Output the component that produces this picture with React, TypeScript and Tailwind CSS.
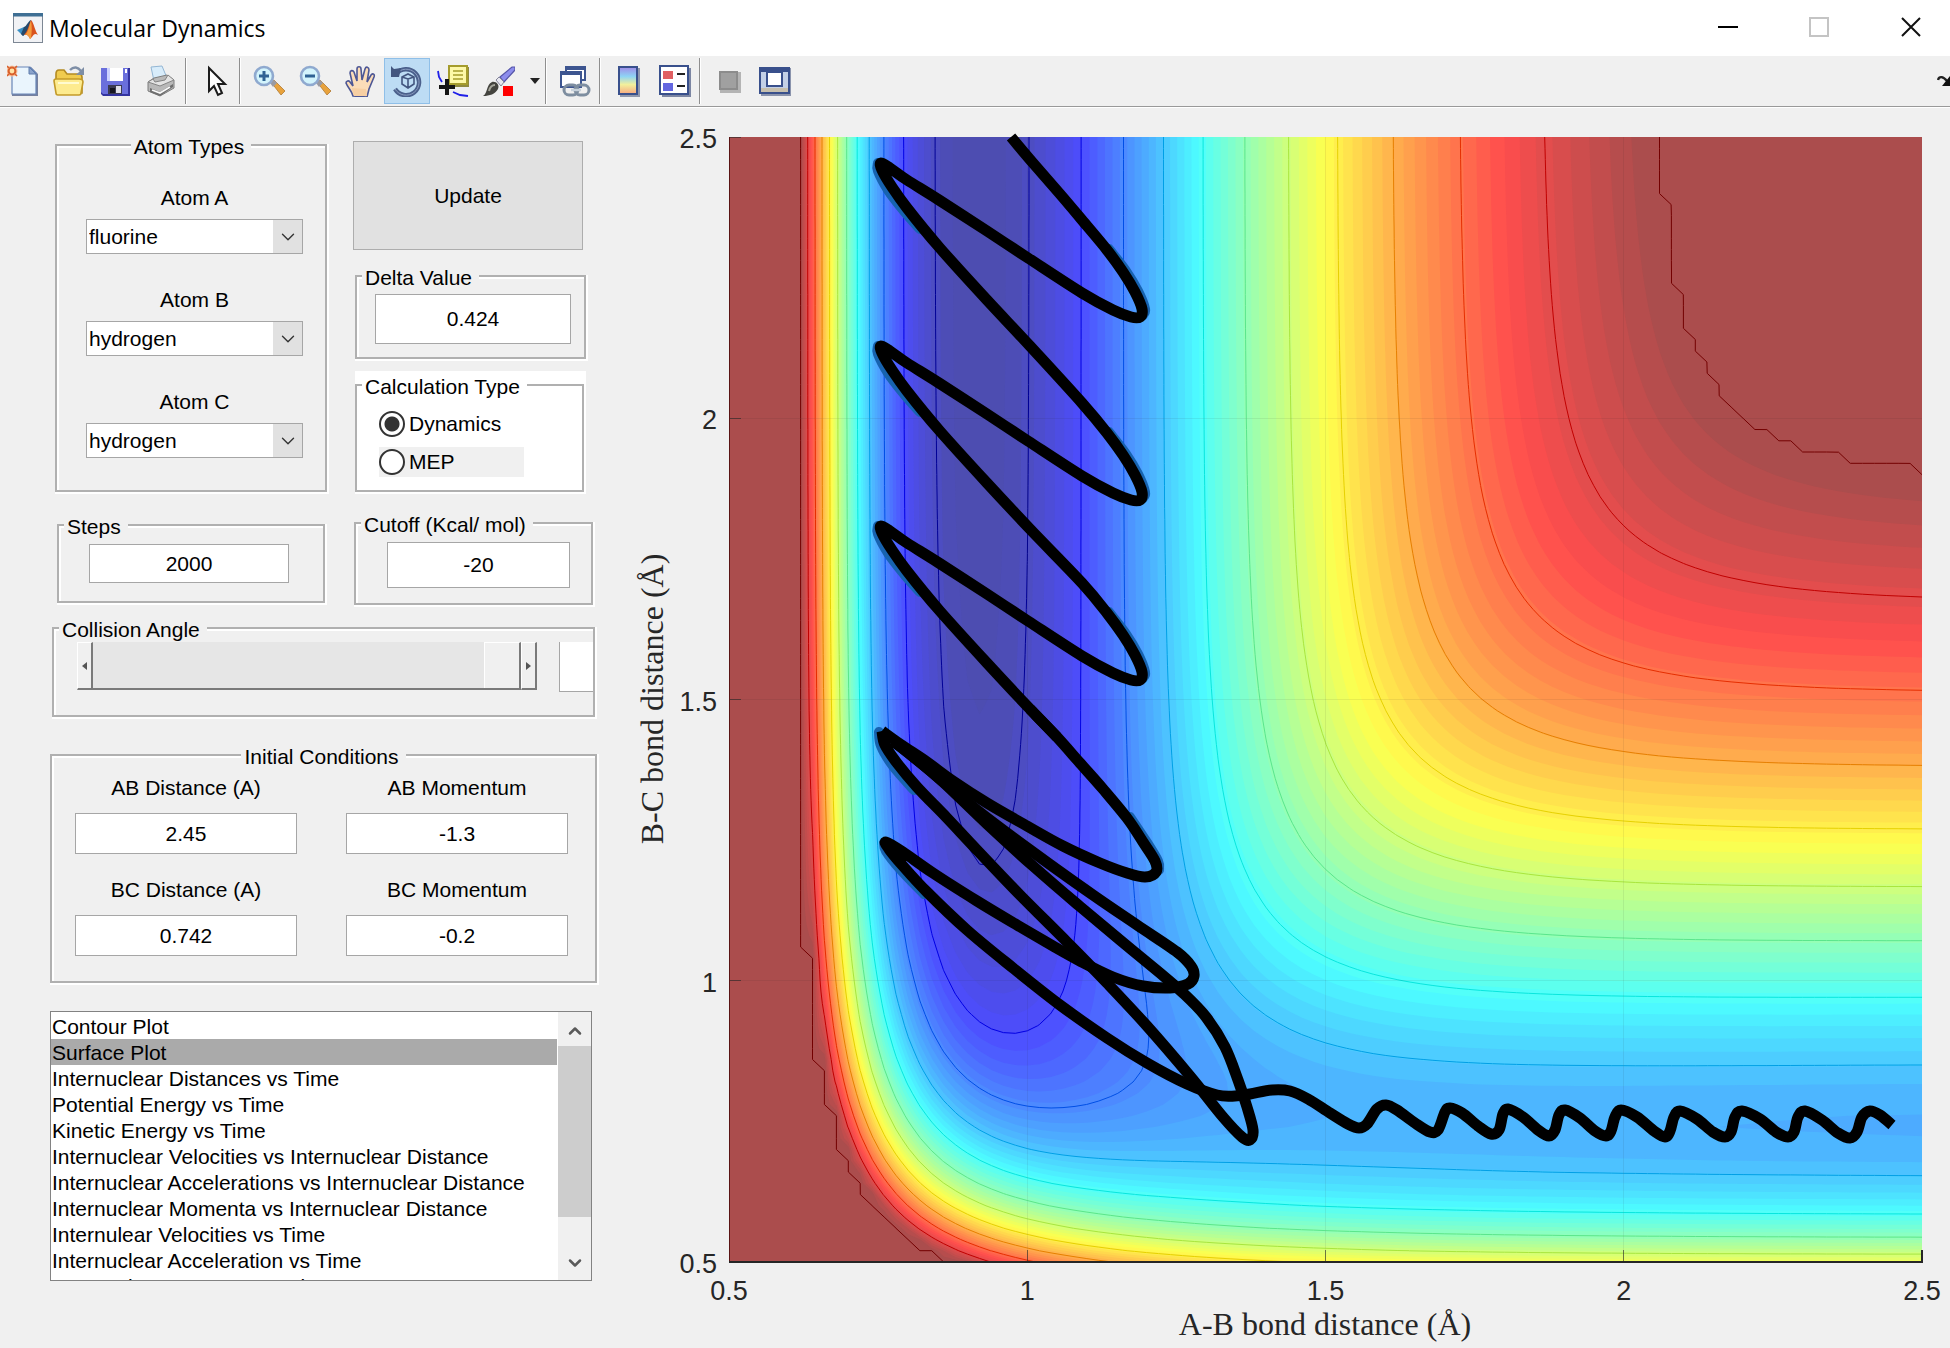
import { useId, useMemo, useState, type ReactNode } from "react";
import { ChevronDown, ChevronUp } from "lucide-react";

type Point = [number, number];

// ---------------------------------------------------------------------------
// Potential energy surface (LEPS, collinear F-H-H, kcal/mol)
// ---------------------------------------------------------------------------

const HF = { d: 141.1, b: 2.2187, re: 0.917, k: 0.167 };
const HH = { d: 110.2, b: 1.96, re: 0.7419, k: 0.2 };

const CUTOFF = -22.35;
const FLOOR = -141.5;
const BANDS = 64;
const LEVELS = [-136.8, -126.7, -116.4, -106, -95.7, -85.2, -74.9, -64.4, -53.9, -43.2, -32.5, CUTOFF - 0.001];

function integrals(bond: typeof HF, r: number): Point {
  const e = Math.exp(-bond.b * (r - bond.re));
  const { d, k } = bond;
  const q = (d / 4) * ((3 + k) * e * e - (2 + 6 * k) * e);
  const j = (d / 4) * ((1 + 3 * k) * e * e - (6 + 2 * k) * e);
  return [q / (1 + k), j / (1 + k)];
}

function potential(ab: number, bc: number) {
  const [q1, j1] = integrals(HF, ab);
  const [q2, j2] = integrals(HH, bc);
  const [q3, j3] = integrals(HF, ab + bc);
  const v = q1 + q2 + q3 - Math.sqrt(0.5 * ((j1 - j2) ** 2 + (j2 - j3) ** 2 + (j3 - j1) ** 2));
  return Math.min(v, CUTOFF);
}

// Plot area inside the svg
const LEFT = 729;
const RIGHT = 1922;
const TOP = 137;
const BOTTOM = 1262;
const sx = (r: number) => LEFT + ((r - 0.5) / 2) * (RIGHT - LEFT);
const sy = (r: number) => BOTTOM - ((r - 0.5) / 2) * (BOTTOM - TOP);

// Grid of 101 nodes per axis plus one outer ring that closes every contour
const NODES = 101;
const SIZE = NODES + 2;
const nodeAt = (i: number) => 0.5 + Math.min(Math.max(i - 1, 0), NODES - 1) * 0.02;

function buildGrid() {
  const grid = new Float64Array(SIZE * SIZE).fill(-1e9);
  for (let j = 1; j <= NODES; j++) {
    for (let i = 1; i <= NODES; i++) grid[j * SIZE + i] = potential(nodeAt(i), nodeAt(j));
  }
  return grid;
}

function traceRings(grid: Float64Array, level: number): Point[][] {
  const next = new Map<number, number>();
  for (let j = 0; j < SIZE - 1; j++) {
    for (let i = 0; i < SIZE - 1; i++) {
      const a = j * SIZE + i;
      const inside = [a, a + 1, a + SIZE + 1, a + SIZE].map((n) => grid[n] > level);
      const edges = [a * 2, (a + 1) * 2 + 1, (a + SIZE) * 2, a * 2 + 1];
      for (let k = 0; k < 4; k++) {
        if (!inside[k] || inside[(k + 1) % 4]) continue;
        for (let m = 1; m < 4; m++) {
          const n = (k + m) % 4;
          if (!inside[n] && inside[(n + 1) % 4]) {
            next.set(edges[k], edges[n]);
            break;
          }
        }
      }
    }
  }

  const locate = (edge: number): Point => {
    const a = edge >> 1;
    const b = edge & 1 ? a + SIZE : a + 1;
    const t = (level - grid[a]) / (grid[b] - grid[a]);
    const x1 = sx(nodeAt(a % SIZE));
    const x2 = sx(nodeAt(b % SIZE));
    const y1 = sy(nodeAt(Math.floor(a / SIZE)));
    const y2 = sy(nodeAt(Math.floor(b / SIZE)));
    return [x1 + (x2 - x1) * t, y1 + (y2 - y1) * t];
  };

  const rings: Point[][] = [];
  while (next.size > 0) {
    const ring: Point[] = [];
    let edge = next.keys().next().value as number;
    while (next.has(edge)) {
      ring.push(locate(edge));
      const following = next.get(edge) as number;
      next.delete(edge);
      edge = following;
    }
    rings.push(ring);
  }
  return rings;
}

const fmt = ([x, y]: Point) => `${x.toFixed(1)} ${y.toFixed(1)}`;

const fillPath = (rings: Point[][]) => rings.map((r) => `M${r.map(fmt).join("L")}Z`).join("");

// Same rings as strokes, without the parts that run along the frame
function linePath(rings: Point[][]) {
  const near = (a: number, b: number) => Math.abs(a - b) < 0.2;
  const onFrame = (p: Point, q: Point) =>
    [LEFT, RIGHT].some((x) => near(p[0], x) && near(q[0], x)) ||
    [TOP, BOTTOM].some((y) => near(p[1], y) && near(q[1], y));
  return rings
    .map((r) =>
      [...r, r[0]].map((p, i, all) => (i === 0 || onFrame(all[i - 1], p) ? "M" : "L") + fmt(p)).join(""),
    )
    .join("");
}

function jet(t: number, mix: number, scale = 1) {
  const channel = (c: number) => {
    const v = Math.min(Math.max(1.5 - Math.abs(4 * t - c), 0), 1);
    return Math.round(255 * (v * mix * scale + (1 - mix)));
  };
  return `rgb(${channel(3)},${channel(2)},${channel(1)})`;
}

// ---------------------------------------------------------------------------
// Trajectory
// ---------------------------------------------------------------------------

const REACTANTS: Point[] = [
  [1892, 1125], [1880, 1115], [1870, 1111], [1862, 1117], [1857, 1132], [1850, 1138],
  [1838, 1133], [1822, 1120], [1805, 1111], [1798, 1117], [1794, 1132], [1788, 1137],
  [1776, 1132], [1760, 1119], [1742, 1111], [1735, 1117], [1731, 1132], [1725, 1137],
  [1713, 1132], [1697, 1119], [1680, 1111], [1674, 1117], [1670, 1131], [1665, 1137],
  [1654, 1131], [1637, 1117], [1621, 1110], [1615, 1117], [1611, 1131], [1606, 1136],
  [1595, 1131], [1580, 1118], [1565, 1110], [1559, 1115], [1555, 1130], [1549, 1136],
  [1538, 1130], [1523, 1117], [1508, 1109], [1503, 1114], [1499, 1130], [1491, 1134],
  [1478, 1126], [1462, 1113], [1450, 1108], [1445, 1112], [1438, 1130], [1430, 1132],
  [1415, 1123], [1397, 1110], [1386, 1105], [1377, 1109], [1367, 1124], [1359, 1128],
  [1348, 1124], [1330, 1113], [1308, 1099], [1290, 1091], [1272, 1090], [1250, 1094],
  [1235, 1096], [1217, 1095], [1187, 1084], [1147, 1063], [1107, 1038], [1060, 1005],
  [1013, 968], [967, 930], [927, 892], [903, 866], [889, 849], [886, 842], [903, 852],
  [933, 873], [977, 901], [1017, 925], [1053, 946], [1080, 961], [1113, 977], [1143, 986],
  [1170, 988], [1188, 984], [1194, 976], [1191, 966], [1177, 952], [1137, 925], [1093, 895],
  [1037, 855], [977, 810], [927, 768], [893, 741],
];

const TRANSITION: Point[] = [
  [893, 741], [910, 754], [943, 782], [987, 824], [1033, 866], [1077, 904], [1120, 940],
  [1160, 973], [1183, 993], [1206, 1017], [1225, 1047], [1238, 1080], [1247, 1107],
  [1253, 1130], [1250, 1140], [1242, 1137], [1223, 1117], [1190, 1076], [1147, 1026],
  [1107, 983], [1067, 942], [1020, 895], [977, 850], [947, 818], [917, 787], [897, 763],
  [885, 745], [882, 731],
];

const COLLISION: Point[] = [
  [882, 731], [900, 744], [927, 762], [953, 781], [987, 803], [1027, 826], [1063, 846],
  [1100, 863], [1127, 873], [1145, 877], [1156, 872], [1155, 861], [1143, 842], [1127, 818],
  [1103, 789], [1080, 763], [1057, 737], [1030, 709],
];

// One vibration of the product molecule, repeated further down the channel
const VIBRATION: Point[] = [
  [1082, 220], [1107, 250], [1123, 272], [1135, 292], [1142, 309], [1140, 317], [1131, 317],
  [1113, 310], [1082, 293], [1028, 258], [987, 231], [939, 200], [907, 180], [890, 168],
  [881, 163], [882, 170], [892, 187], [907, 208], [939, 247], [987, 300], [1030, 346],
];

const shift = (points: Point[], dy: number) => points.map(([x, y]): Point => [x, y + dy]);

const PRODUCTS: Point[] = [
  [1011, 137],
  [1033, 163],
  [1060, 194],
  ...VIBRATION,
  ...shift(VIBRATION, 183),
  ...shift(VIBRATION, 363),
  [1057, 737],
];

// Turning points, where the line dips below the surface
const SUNKEN: Point[][] = [
  ...[0, 183, 363].map((dy) => shift([[878, 163], [878, 171], [888, 190], [904, 211], [920, 229]], dy)),
  ...[0, 183, 363].map((dy) => shift([[1109, 249], [1126, 271], [1138, 291], [1145, 309], [1143, 315]], dy)),
  [[879, 732], [881, 746], [893, 766], [914, 790]],
  [[1130, 817], [1146, 841], [1158, 861], [1159, 870]],
  [[884, 843], [886, 851], [900, 869], [924, 894]],
];

function smooth(points: Point[]) {
  let d = `M${points[0].join(" ")}`;
  for (let i = 0; i < points.length - 1; i++) {
    const [p0, p1, p2, p3] = [points[Math.max(i - 1, 0)], points[i], points[i + 1], points[Math.min(i + 2, points.length - 1)]];
    const c1: Point = [p1[0] + (p2[0] - p0[0]) / 6, p1[1] + (p2[1] - p0[1]) / 6];
    const c2: Point = [p2[0] - (p3[0] - p1[0]) / 6, p2[1] - (p3[1] - p1[1]) / 6];
    d += `C${fmt(c1)} ${fmt(c2)} ${fmt(p2)}`;
  }
  return d;
}

const TICKS = [0.5, 1, 1.5, 2, 2.5];

function SurfacePlot() {
  const { bands, lines } = useMemo(() => {
    const grid = buildGrid();
    const step = (CUTOFF - FLOOR) / BANDS;
    return {
      bands: Array.from({ length: BANDS - 1 }, (_, k) => ({
        d: fillPath(traceRings(grid, FLOOR + (k + 1) * step)),
        fill: jet((k + 1.5) / BANDS, 0.7),
      })),
      lines: LEVELS.map((level) => ({
        d: linePath(traceRings(grid, level)),
        stroke: jet((level - FLOOR) / (CUTOFF - FLOOR), 1, 0.9),
      })),
    };
  }, []);

  return (
    <svg viewBox="630 108 1320 1240" className="w-full min-w-0 flex-1 self-start" role="img" aria-label="Surface Plot">
      <rect x={LEFT} y={TOP} width={RIGHT - LEFT} height={BOTTOM - TOP} fill={jet(1 / BANDS, 0.7)} />
      {bands.map((band, i) => (
        <path key={i} d={band.d} fill={band.fill} fillRule="evenodd" />
      ))}
      {lines.map((line, i) => (
        <path key={i} d={line.d} fill="none" stroke={line.stroke} strokeWidth="1" />
      ))}

      <g stroke="#262626" shapeRendering="crispEdges">
        {TICKS.slice(1, 4).map((t) => (
          <g key={t} strokeOpacity="0.08">
            <path d={`M${sx(t)} ${TOP}V${BOTTOM}`} />
            <path d={`M${LEFT} ${sy(t)}H${RIGHT}`} />
          </g>
        ))}
        {TICKS.map((t) => (
          <g key={t} strokeOpacity="0.6">
            <path d={`M${sx(t)} ${BOTTOM}v-12`} />
            <path d={`M${LEFT} ${sy(t)}h12`} />
          </g>
        ))}
        <path d={`M${LEFT} ${TOP}V${BOTTOM}`} stroke="#5a1414" />
        <path d={`M${LEFT} ${BOTTOM}H${RIGHT}v-12`} fill="none" strokeWidth="2" />
      </g>

      <g fill="none" stroke="#1763b0" strokeWidth="10" strokeLinecap="round">
        {SUNKEN.map((points, i) => (
          <path key={i} d={smooth(points)} />
        ))}
      </g>
      <g fill="none" stroke="#000" strokeWidth="11" strokeLinejoin="round">
        <path d={smooth(REACTANTS)} />
        <path d={smooth(TRANSITION)} />
        <path d={smooth(COLLISION)} />
        <path d={smooth(PRODUCTS)} />
      </g>

      <g className="font-['Liberation_Sans',Arial,sans-serif]" fontSize="27" fill="#262626">
        {TICKS.map((t) => (
          <g key={t}>
            <text x={sx(t)} y="1300" textAnchor="middle">{t}</text>
            <text x="717" y={sy(t) + 11} textAnchor="end">{t}</text>
          </g>
        ))}
      </g>
      <g className="font-['Liberation_Serif','Times_New_Roman',serif]" fontSize="32" fill="#262626" textAnchor="middle">
        <text x="1325" y="1335">A-B bond distance (Å)</text>
        <text transform="translate(663 699) rotate(-90)">B-C bond distance (Å)</text>
      </g>
    </svg>
  );
}

// ---------------------------------------------------------------------------
// Title bar and toolbar
// ---------------------------------------------------------------------------

function TitleBar() {
  return (
    <header className="flex h-14 items-center bg-white pl-3">
      <svg width="32" height="32" viewBox="0 0 32 32" aria-hidden="true">
        <rect x="1.5" y="1.5" width="29" height="29" fill="#f1f2f5" stroke="#7d8794" />
        <rect x="1" y="1" width="30" height="3.5" fill="#3f6f94" />
        <path d="M5 18l7-3 4 3-5 6z" fill="#3a8fc4" />
        <path d="M12 15c3-1 4-6 7-7l-2 11-6 5-2-2z" fill="#26496b" />
        <path d="M19 8c3 3 4 11 7 15-3-2-4-1-6 2l-2 2c-1-3-3-5-6-4 4-4 5-11 7-15z" fill="#d9531e" />
        <path d="M19 9c1 5 1 10 0 17l-1 1c-1-3-3-5-5-4 4-4 4-10 6-14z" fill="#f49b3c" />
      </svg>
      <h1 className="ml-[5px] font-['Open_Sans','Segoe_UI',sans-serif] text-[23px] leading-8 text-black">Molecular Dynamics</h1>
      <div className="ml-auto flex h-[54px] self-start">
        <button aria-label="Minimize" className="flex w-[91px] items-center justify-center">
          <svg width="20" height="20" viewBox="0 0 20 20" stroke="#000" strokeWidth="2"><path d="M0 10h20" /></svg>
        </button>
        <button aria-label="Maximize" disabled className="flex w-[91px] items-center justify-center">
          <svg width="20" height="20" viewBox="0 0 20 20" fill="none" stroke="#c4c4c4" strokeWidth="2"><path d="M1 1h18v18H1z" /></svg>
        </button>
        <button aria-label="Close" className="flex w-[86px] items-center justify-center pl-2">
          <svg width="20" height="20" viewBox="0 0 20 20" stroke="#111" strokeWidth="2"><path d="M1 1l18 18M19 1L1 19" /></svg>
        </button>
      </div>
    </header>
  );
}

interface ToolProps {
  label: string;
  active?: boolean;
  children: ReactNode;
}

function Tool({ label, active, children }: ToolProps) {
  return (
    <button
      aria-label={label}
      aria-pressed={active}
      className={`flex h-[46px] w-[46px] items-center justify-center border ${
        active ? "border-[#8fbfe8] bg-[#bddcf4]" : "border-transparent"
      }`}
    >
      <svg width="32" height="32" viewBox="0 0 32 32" fill="none">
        {children}
      </svg>
    </button>
  );
}

function Separator() {
  return (
    <div className="w-2 pl-px">
      <div className="h-[46px] w-0.5 border-l border-[#8f8f8f] bg-white" />
    </div>
  );
}

function Magnifier({ plus }: { plus?: boolean }) {
  return (
    <>
      <path d="M18 17l3-2 11 11-4 4z" fill="#e8a23c" stroke="#b07a33" strokeWidth="0.8" />
      <path d="M17 18l4-3 3 3-4 4z" fill="#9a9aa2" />
      <circle cx="11" cy="11" r="9" fill="#d3f4fc" stroke="#8fa9cf" strokeWidth="2.6" />
      <path d={plus ? "M11 6v10M6 11h10" : "M6 11h10"} stroke="#2f6394" strokeWidth="3" />
    </>
  );
}

function Toolbar() {
  return (
    <div role="toolbar" className="flex h-[51px] items-center border-b border-[#999] bg-[#f0f0f0]">
      <Tool label="New Figure">
        <path d="M5 2h19l7 7v22H5z" fill="#76819f" />
        <path d="M5 2h18l6 6v21H5z" fill="#eaf5fd" stroke="#6886b8" strokeWidth="1.2" />
        <path d="M22 2v7h7z" fill="#8ba3cb" stroke="#5f7cac" />
        <circle cx="5" cy="6" r="5.5" fill="#f7c3a0" />
        <circle cx="5" cy="6" r="3.4" fill="#ffe3a5" stroke="#d9602c" strokeWidth="2" />
        <path d="M0 1l2 2M10 1L8 3M0 11l2-2M10 11L8 9" stroke="#d9602c" strokeWidth="1.6" />
      </Tool>
      <Tool label="Open File">
        <path d="M3 9c0-2 1-4 3-4h5l3 4h12c2 0 3 1 3 3v16H6c-2 0-3-2-3-4z" fill="#f0cb4e" stroke="#b38a22" strokeWidth="1.6" />
        <path d="M1 16c0-1 1-2 2-2h23c2 0 4 1 4 3l-2 11c0 1-1 2-2 2H5c-1 0-2-1-2-2z" fill="#fdeb8f" stroke="#c39a28" strokeWidth="1.6" />
        <path d="M5 18h21" stroke="#fffbd0" strokeWidth="2" />
        <path d="M17 5c4-4 8-3 11 1" stroke="#7e8ea6" strokeWidth="2.4" />
        <path d="M31 2v8h-8z" fill="#7e8ea6" />
      </Tool>
      <Tool label="Save Figure">
        <path d="M2 3h29v28H4l-2-2z" fill="#33339f" />
        <path d="M2 3h27v26H4l-2-2z" fill="#6a6fdc" />
        <path d="M8 3h16v13H8z" fill="#fff" />
        <path d="M8 3h3v13H8z" fill="#ccd2ff" />
        <path d="M9 20h14v9H9z" fill="#3b3b52" />
        <path d="M17 21h5v7h-5z" fill="#e0e0e8" />
        <path d="M11 23h5v5h-5z" fill="#15151f" />
        <path d="M27 4v4" stroke="#fff" strokeWidth="2" />
      </Tool>
      <Tool label="Print Figure">
        <path d="M6 2l11-1 5 12-13 3z" fill="#d8ecfa" stroke="#93b6d4" />
        <path d="M3 17l6-4 13-3 7 5v8l-14 8-12-5z" fill="#b9b9b9" stroke="#7d7d7d" />
        <path d="M3 17l12 4 14-6-6-5-3 5-10 2-2-3z" fill="#e3e3e3" stroke="#858585" />
        <path d="M5 23l10 4 13-8v3l-13 9-10-4z" fill="#6e6e6e" />
        <path d="M7 25l8 3 10-6" stroke="#fafafa" strokeWidth="1.6" />
      </Tool>
      <Separator />
      <Tool label="Edit Plot">
        <path d="M10 3v23l5-5 4 9 4-2-4-9h7z" fill="#fff" stroke="#1c1c1c" strokeWidth="2" />
      </Tool>
      <Separator />
      <Tool label="Zoom In">
        <Magnifier plus />
      </Tool>
      <Tool label="Zoom Out">
        <Magnifier />
      </Tool>
      <Tool label="Pan">
        <path
          d="M8 31c-1-5-5-8-7-13 0-2 3-3 4-1l3 4L5 8c0-3 3-3 4-1l3 9V4c0-3 4-3 4 0l1 11 3-11c1-3 4-2 4 1l-2 12 4-7c2-2 4-1 3 2l-5 12-2 8z"
          fill="#fbdcb8"
          stroke="#4d5795"
          strokeWidth="1.6"
        />
        <path d="M9 31c-1-4-2-5-2-8l14 1 1 7z" fill="#f7cfa3" />
      </Tool>
      <Tool label="Rotate 3D" active>
        <path d="M5 9A13 13 0 1 1 4 24" stroke="#4b608c" strokeWidth="4.4" />
        <path d="M5 9A13 13 0 1 1 4 24" stroke="#8a9cc0" strokeWidth="1" />
        <path d="M0 12V1l3 3 7-1-2 9z" fill="#43567f" />
        <path d="M11 12l6-3 6 3v7l-6 4-6-4zM11 12l6 2 6-2M17 14v8" stroke="#43567f" strokeWidth="1.6" />
      </Tool>
      <Tool label="Data Cursor">
        <path d="M12 2h20v20H12z" fill="#8f8a3f" />
        <path d="M12 1h18v18H12z" fill="#fdf8a8" stroke="#a59c2c" strokeWidth="2" />
        <path d="M16 6h10M16 10h10M16 14h10" stroke="#a59c2c" strokeWidth="1.4" />
        <path d="M1 6l1 6 3 5M16 27l7 3 8 1" stroke="#2020e8" strokeWidth="1.8" />
        <path d="M10 14v16M2 22h16" stroke="#151515" strokeWidth="4" />
      </Tool>
      <Tool label="Brush Data">
        <path d="M17 12L29 2h3v3L21 17z" fill="#8d8dec" stroke="#5555a8" strokeWidth="1.2" />
        <path d="M13 15l3-3 5 5-3 4z" fill="#e7e7ef" stroke="#85859a" />
        <path d="M0 31c5-3 3-11 9-14 4-1 8 3 6 7-3 5-8 7-15 7z" fill="#44443f" />
        <path d="M6 26c1-4 3-6 6-6" stroke="#a5a59a" strokeWidth="2" />
        <path d="M20 21h10v10H20z" fill="#f00" />
      </Tool>
      <button aria-label="Brush colour" className="flex h-[46px] w-[22px] items-center justify-center pl-1">
        <svg width="10" height="6" viewBox="0 0 10 6"><path d="M0 0h10L5 6z" fill="#222" /></svg>
      </button>
      <Separator />
      <Tool label="Link Plot">
        <path d="M7 2h19v13H7z" fill="#fff" stroke="#3d5590" strokeWidth="2" />
        <path d="M6 1h21v4H6z" fill="#3d5590" />
        <path d="M2 7h20v15H2z" fill="#fff" stroke="#3d5590" strokeWidth="2" />
        <path d="M1 6h22v4H1z" fill="#3d5590" />
        <rect x="5" y="20" width="14" height="10" rx="5" stroke="#7e8ea0" strokeWidth="3" />
        <rect x="16" y="20" width="14" height="10" rx="5" stroke="#7e8ea0" strokeWidth="3" />
        <path d="M12 25h10" stroke="#c8d2dc" strokeWidth="2.4" />
      </Tool>
      <Separator />
      <Tool label="Insert Colorbar">
        <defs>
          <linearGradient id="colorbar" x1="0" y1="0" x2="0" y2="1">
            <stop offset="0" stopColor="#a08ae8" />
            <stop offset="0.35" stopColor="#8ed4f4" />
            <stop offset="0.65" stopColor="#f2f09c" />
            <stop offset="1" stopColor="#f8a880" />
          </linearGradient>
        </defs>
        <path d="M7 3h20v29H7z" fill="#8f96ab" />
        <path d="M6 2h18v27H6z" fill="url(#colorbar)" stroke="#39508c" strokeWidth="2" />
      </Tool>
      <Tool label="Insert Legend">
        <path d="M3 3h29v29H3z" fill="#7c86a3" />
        <path d="M1 1h28v28H1z" fill="#fff" stroke="#39508c" strokeWidth="2" />
        <path d="M4 6h10v8H4z" fill="#e05f62" />
        <path d="M4 18h10v8H4z" fill="#6467e0" />
        <path d="M18 9h8M18 21h8" stroke="#222" strokeWidth="2" />
      </Tool>
      <Separator />
      <Tool label="Hide Plot Tools">
        <path d="M7 7h21v21H7z" fill="#b4b4b4" />
        <path d="M6 6h19v19H6z" fill="#8c8c8c" />
        <path d="M8 8h15v15H8z" fill="#a0a0a0" />
      </Tool>
      <Tool label="Show Plot Tools">
        <path d="M2 3h30v28H2z" fill="#8a93ac" />
        <path d="M1 3h29v25H1z" fill="#c3d0e6" stroke="#39508c" strokeWidth="2" />
        <path d="M0 2h31v5H0z" fill="#39508c" />
        <path d="M8 7h15v14H8z" fill="#fff" stroke="#39508c" strokeWidth="2" />
        <path d="M2 23h27v4H2z" fill="#c6bfae" />
      </Tool>
      <button aria-label="Dock Figure" className="ml-auto overflow-hidden">
        <svg width="13" height="12" viewBox="0 0 13 12" fill="none">
          <path d="M1 5c1-4 5-4 9 1" stroke="#222" strokeWidth="2.4" />
          <path d="M5 11L13 1v10z" fill="#111" />
        </svg>
      </button>
    </div>
  );
}

// ---------------------------------------------------------------------------
// Controls
// ---------------------------------------------------------------------------

interface PanelProps {
  title: string;
  className: string;
  center?: boolean;
  white?: boolean;
  children: ReactNode;
}

function Panel({ title, className, center, white, children }: PanelProps) {
  return (
    <fieldset className={`min-w-0 border-2 border-[#b0b0b0] shadow-[1px_1px_0_1px_#fff,inset_1px_1px_0_1px_#fff] ${className}`}>
      <legend
        className={`h-7 pr-[7px] pl-[3px] leading-[31px] ${center ? "mx-auto" : "ml-[5px]"} ${
          white ? "bg-white" : "bg-[#f0f0f0]"
        }`}
      >
        {title}
      </legend>
      {children}
    </fieldset>
  );
}

function ValueInput({ label, value, className }: { label: string; value: string; className: string }) {
  return (
    <input
      aria-label={label}
      defaultValue={value}
      className={`block border border-[#a6a6a6] bg-white text-center outline-none ${className}`}
    />
  );
}

function AtomSelect({ label, value }: { label: string; value: string }) {
  const id = useId();
  return (
    <div className="flex w-[217px] flex-col items-center gap-[9px]">
      <label htmlFor={id} className="leading-6">
        {label}
      </label>
      <div className="relative w-full">
        <select
          id={id}
          defaultValue={value}
          className="h-[35px] w-full appearance-none rounded-none border border-[#a6a6a6] bg-white pl-0.5 outline-none"
        >
          <option>fluorine</option>
          <option>hydrogen</option>
          <option>chlorine</option>
        </select>
        <span className="pointer-events-none absolute inset-y-px right-px flex w-[29px] items-center justify-center bg-[#e1e1e1]">
          <ChevronDown size={22} strokeWidth={1.5} className="text-[#333]" />
        </span>
      </div>
    </div>
  );
}

function ConditionField({ label, value }: { label: string; value: string }) {
  const id = useId();
  return (
    <div className="flex w-[222px] flex-col items-center gap-[13px]">
      <label htmlFor={id} className="leading-6">
        {label}
      </label>
      <input
        id={id}
        defaultValue={value}
        className="h-[41px] w-full border border-[#a6a6a6] bg-white text-center outline-none"
      />
    </div>
  );
}

function ScrollArrow({ direction }: { direction: "left" | "right" }) {
  return (
    <button
      aria-label={`Scroll ${direction}`}
      className="flex h-12 w-4 items-center justify-center border-t border-r-2 border-b-2 border-l border-t-white border-r-[#7a7a7a] border-b-[#7a7a7a] border-l-white bg-[#f0f0f0]"
    >
      <svg width="5" height="8" viewBox="0 0 5 8" fill="#555">
        <path d={direction === "left" ? "M5 0v8L0 4z" : "M0 0v8l5-4z"} />
      </svg>
    </button>
  );
}

const PLOT_TYPES = [
  "Contour Plot",
  "Surface Plot",
  "Internuclear Distances vs Time",
  "Potential Energy vs Time",
  "Kinetic Energy vs Time",
  "Internuclear Velocities vs Internuclear Distance",
  "Internuclear Accelerations vs Internuclear Distance",
  "Internuclear Momenta vs Internuclear Distance",
  "Internulear Velocities vs Time",
  "Internuclear Acceleration vs Time",
  "Internuclear Momenta vs Time",
];

function PlotList() {
  const [plot, setPlot] = useState("Surface Plot");

  return (
    <div className="flex h-[270px] w-[542px] border border-[#828282] bg-white">
      <select
        aria-label="Plot type"
        size={10}
        value={plot}
        onChange={(e) => setPlot(e.target.value)}
        className="h-[268px] flex-1 overflow-hidden rounded-none bg-white bg-none pt-px text-black outline-none"
      >
        {PLOT_TYPES.map((name) => (
          <option
            key={name}
            className="h-[26px] min-h-[26px] rounded-none px-px pt-0.5 pb-0 leading-6 text-black checked:bg-[#aaa] checked:bg-[linear-gradient(#aaa,#aaa)]"
          >
            {name}
          </option>
        ))}
      </select>
      <div className="ml-px flex w-[33px] flex-col bg-[#f0f0f0]">
        <button aria-label="Scroll up" className="flex h-[34px] items-center justify-center pt-1">
          <ChevronUp size={20} strokeWidth={3} className="text-[#5a5a5a]" />
        </button>
        <div className="h-[171px] bg-[#cdcdcd]" />
        <button aria-label="Scroll down" className="mt-auto flex h-[34px] items-center justify-center">
          <ChevronDown size={20} strokeWidth={3} className="text-[#5a5a5a]" />
        </button>
      </div>
    </div>
  );
}

function CalculationType() {
  const [type, setType] = useState("Dynamics");
  const radio =
    "size-[26px] appearance-none rounded-full border-2 border-[#333] bg-white checked:bg-[radial-gradient(circle,#333_7px,#fff_8px)]";

  return (
    <div className="h-[123px] w-[231px] bg-white">
      <Panel title="Calculation Type" white className="h-[121px] w-[229px]">
        <label className="mt-2.5 ml-[22px] flex h-[30px] w-[145px] items-center gap-1">
          <input type="radio" name="calculation" className={radio} checked={type === "Dynamics"} onChange={() => setType("Dynamics")} />
          Dynamics
        </label>
        <label className="mt-2 ml-[22px] flex h-[30px] w-[145px] items-center gap-1 bg-[#f0f0f0]">
          <input type="radio" name="calculation" className={radio} checked={type === "MEP"} onChange={() => setType("MEP")} />
          MEP
        </label>
      </Panel>
    </div>
  );
}

function Controls() {
  return (
    <aside className="w-[630px] shrink-0 pl-[50px]">
      <div className="ml-[5px] flex gap-[26px] pt-[23px]">
        <Panel title="Atom Types" center className="h-[361px] w-[272px]">
          <div className="ml-[29px] flex flex-col gap-[34px] pt-[27px]">
            <AtomSelect label="Atom A" value="fluorine" />
            <AtomSelect label="Atom B" value="hydrogen" />
            <AtomSelect label="Atom C" value="hydrogen" />
          </div>
        </Panel>
        <div className="flex w-[233px] flex-col pt-2.5">
          <button className="h-[109px] w-[230px] border border-[#adadad] bg-[#e1e1e1]">Update</button>
          <div className="mt-3 flex flex-col gap-3 pl-0.5">
            <Panel title="Delta Value" className="h-[97px]">
              <ValueInput label="Delta Value" value="0.424" className="mt-1 ml-[18px] h-[50px] w-[196px]" />
            </Panel>
            <CalculationType />
          </div>
        </div>
      </div>

      <div className="mt-[15px] ml-[7px] flex items-center gap-[29px]">
        <Panel title="Steps" className="h-[92px] w-[268px]">
          <ValueInput label="Steps" value="2000" className="mt-[5px] ml-[30px] h-[39px] w-[200px]" />
        </Panel>
        <Panel title="Cutoff (Kcal/ mol)" className="h-24 w-[239px]">
          <ValueInput label="Cutoff (Kcal/ mol)" value="-20" className="mt-[5px] ml-[31px] h-[46px] w-[183px]" />
        </Panel>
      </div>

      <Panel title="Collision Angle" className="mt-[9px] ml-0.5 h-[103px] w-[543px]">
        <div className="flex items-start pl-[23px]">
          <ScrollArrow direction="left" />
          <input
            type="range"
            min={0}
            max={180}
            defaultValue={180}
            aria-label="Collision Angle"
            className="h-12 w-[428px] appearance-none border-b-2 border-[#7a7a7a] bg-[#e6e6e6] [&::-webkit-slider-thumb]:h-[46px] [&::-webkit-slider-thumb]:w-[37px] [&::-webkit-slider-thumb]:appearance-none [&::-webkit-slider-thumb]:border-t [&::-webkit-slider-thumb]:border-r-2 [&::-webkit-slider-thumb]:border-l [&::-webkit-slider-thumb]:border-t-white [&::-webkit-slider-thumb]:border-r-[#7a7a7a] [&::-webkit-slider-thumb]:border-l-white [&::-webkit-slider-thumb]:bg-[#f0f0f0]"
          />
          <ScrollArrow direction="right" />
          <input
            aria-label="Collision Angle value"
            className="ml-[22px] h-[50px] min-w-0 flex-1 border-b border-l border-[#a6a6a6] bg-white outline-none"
          />
        </div>
      </Panel>

      <Panel title="Initial Conditions" center className="mt-6 h-[242px] w-[547px]">
        <div className="grid grid-cols-[222px_222px] gap-x-[49px] gap-y-6 pt-[7px] pl-[23px]">
          <ConditionField label="AB Distance (A)" value="2.45" />
          <ConditionField label="AB Momentum" value="-1.3" />
          <ConditionField label="BC Distance (A)" value="0.742" />
          <ConditionField label="BC Momentum" value="-0.2" />
        </div>
      </Panel>

      <div className="mt-7">
        <PlotList />
      </div>
    </aside>
  );
}

export default function App() {
  return (
    <div className="min-h-screen bg-[#f0f0f0] font-['Liberation_Sans',Arial,sans-serif] text-[21px] text-black">
      <TitleBar />
      <Toolbar />
      <main className="flex border-t border-white">
        <Controls />
        <SurfacePlot />
      </main>
    </div>
  );
}
